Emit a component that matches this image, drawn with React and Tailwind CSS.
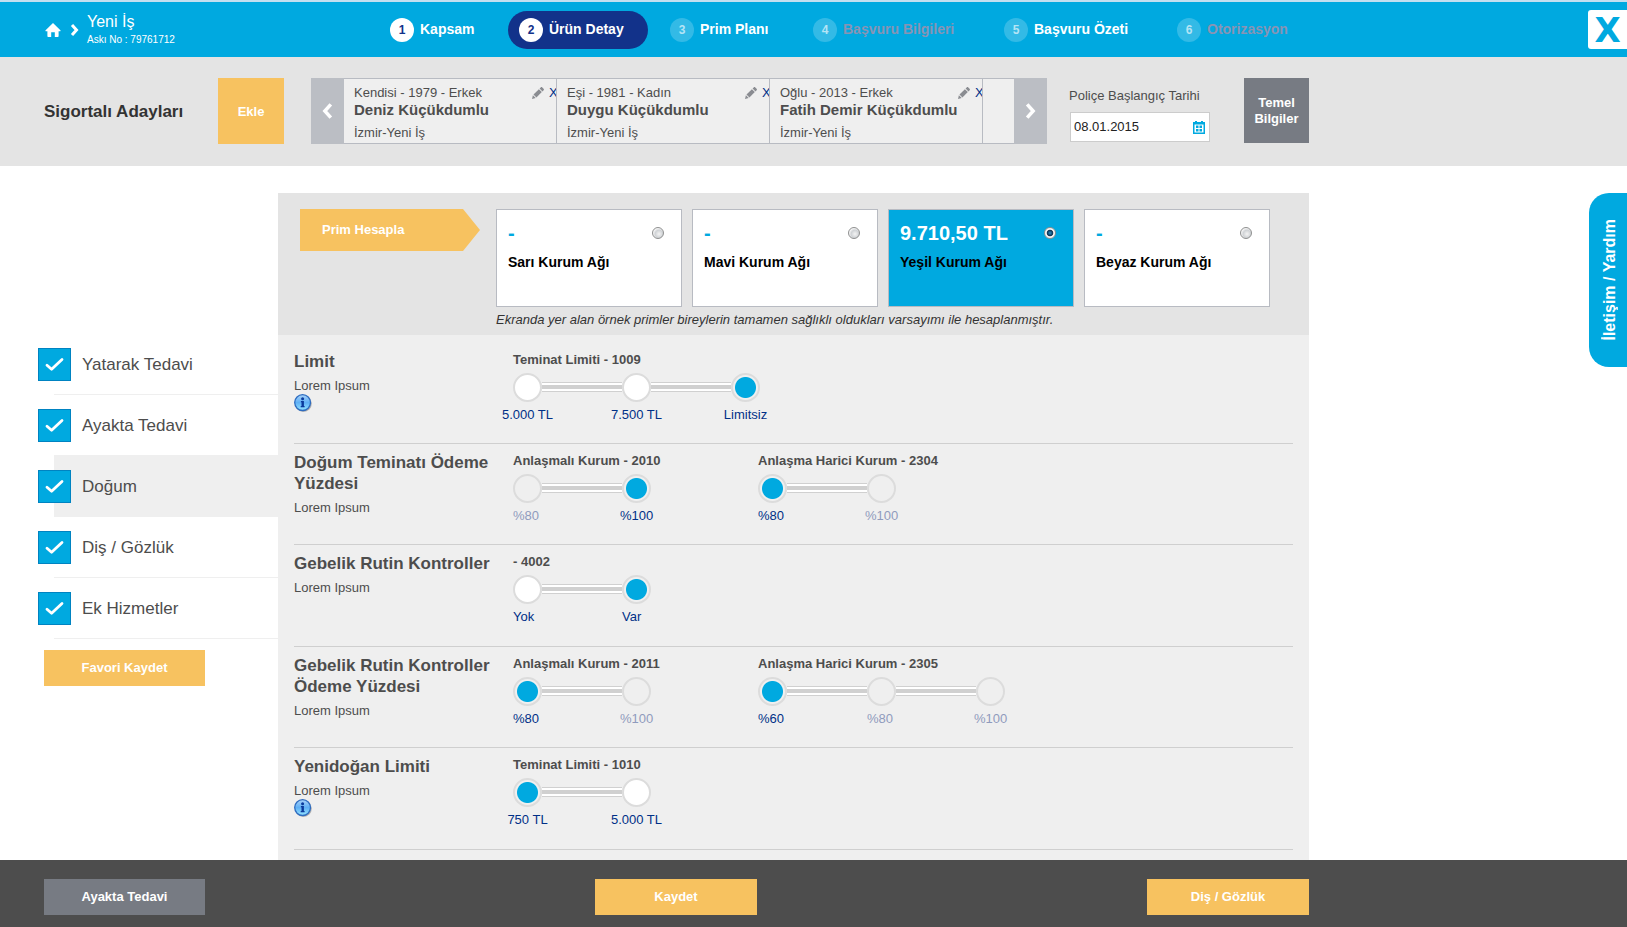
import React, { useState } from "react";

const STEPS = [
  { n: 1, label: "Kapsam", state: "done", width: "min-w-14" },
  { n: 2, label: "Ürün Detay", state: "active", width: "min-w-[78px]" },
  { n: 3, label: "Prim Planı", state: "open", width: "min-w-[70px]" },
  { n: 4, label: "Başvuru Bilgileri", state: "disabled", width: "min-w-[118px]" },
  { n: 5, label: "Başvuru Özeti", state: "open", width: "min-w-[100px]" },
  { n: 6, label: "Otorizasyon", state: "disabled", width: "min-w-[84px]" },
];

const PEOPLE = [
  { info: "Kendisi - 1979 - Erkek", name: "Deniz Küçükdumlu", place: "İzmir-Yeni İş" },
  { info: "Eşi - 1981 - Kadın", name: "Duygu Küçükdumlu", place: "İzmir-Yeni İş" },
  { info: "Oğlu - 2013 - Erkek", name: "Fatih Demir Küçükdumlu", place: "İzmir-Yeni İş" },
];

const NETWORKS = [
  { price: "-", name: "Sarı Kurum Ağı" },
  { price: "-", name: "Mavi Kurum Ağı" },
  { price: "9.710,50 TL", name: "Yeşil Kurum Ağı" },
  { price: "-", name: "Beyaz Kurum Ağı" },
];

const MENU = ["Yatarak Tedavi", "Ayakta Tedavi", "Doğum", "Diş / Gözlük", "Ek Hizmetler"];

const ROWS = [
  {
    title: "Limit",
    info: true,
    height: "min-h-[101px]",
    groups: [
      { id: "g1009", label: "Teminat Limiti - 1009", value: 2, options: ["5.000 TL", "7.500 TL", "Limitsiz"] },
    ],
  },
  {
    title: "Doğum Teminatı Ödeme Yüzdesi",
    height: "min-h-[101px]",
    groups: [
      { id: "g2010", label: "Anlaşmalı Kurum - 2010", value: 1, locked: true, options: ["%80", "%100"] },
      { id: "g2304", label: "Anlaşma Harici Kurum - 2304", value: 0, locked: true, options: ["%80", "%100"] },
    ],
  },
  {
    title: "Gebelik Rutin Kontroller",
    height: "min-h-[102px]",
    groups: [{ id: "g4002", label: "- 4002", value: 1, options: ["Yok", "Var"] }],
  },
  {
    title: "Gebelik Rutin Kontroller Ödeme Yüzdesi",
    height: "min-h-[101px]",
    groups: [
      { id: "g2011", label: "Anlaşmalı Kurum - 2011", value: 0, locked: true, options: ["%80", "%100"] },
      { id: "g2305", label: "Anlaşma Harici Kurum - 2305", value: 0, locked: true, options: ["%60", "%80", "%100"] },
    ],
  },
  {
    title: "Yenidoğan Limiti",
    info: true,
    height: "min-h-[102px]",
    groups: [{ id: "g1010", label: "Teminat Limiti - 1010", value: 0, options: ["750 TL", "5.000 TL"] }],
  },
];

function HomeIcon() {
  return (
    <svg width="16" height="14" viewBox="0 0 16 14" fill="#fff" aria-hidden="true">
      <path d="M8 0 15.4 7.2c.4.5.1 1-.5 1H13.600v5c0 .5-.3.8-.8.8H9.800V9.200H6.200V14H3.200c-.5 0-.8-.3-.8-.8v-5H1.100c-.6 0-.9-.5-.5-1Z" />
    </svg>
  );
}

function Chevron({ left, width, height, stroke }) {
  return (
    <svg width={width} height={height} viewBox="0 0 8 12" fill="none" aria-hidden="true">
      <path d={left ? "M6.500 1 2 6l4.500 5" : "M1.500 1 6 6l-4.500 5"} stroke="#fff" strokeWidth={stroke} />
    </svg>
  );
}

function PencilIcon() {
  return (
    <svg width="12" height="12" viewBox="0 0 12 12" fill="#8a8c91" aria-hidden="true">
      <path d="M0 12 .9 8.300 3.700 11.100Z" />
      <path d="M1.500 7.600 6.900 2.200 9.800 5.100 4.400 10.500Z" />
      <path d="M7.600 1.500 8.700.4c.5-.5 1.100-.5 1.600 0l1.300 1.300c.5.5.5 1.100 0 1.600l-1.100 1.100Z" />
    </svg>
  );
}

function CalendarIcon() {
  return (
    <svg width="12" height="13" viewBox="0 0 12 13" aria-hidden="true">
      <path d="M0 1h2V0h2v1h4V0h2v1h2v12H0Z" fill="#00a9e0" />
      <path d="M1.500 3.500h9v8h-9Z" fill="#fff" />
      <path d="M3 4.500h2.500V7H3ZM6.500 4.500H9V7H6.500ZM3 8h2.500v2.500H3ZM6.500 8H9v2.500H6.500Z" fill="#00a9e0" />
    </svg>
  );
}

function InfoIcon() {
  return (
    <svg width="18" height="18" viewBox="0 0 18 18" aria-hidden="true">
      <defs>
        <linearGradient id="infoFill" x1="0" y1="0" x2="0" y2="1">
          <stop offset="0" stopColor="#a9d2fa" />
          <stop offset="0.500" stopColor="#5fb0f5" />
          <stop offset="1" stopColor="#93e4ff" />
        </linearGradient>
      </defs>
      <circle cx="9.500" cy="9.600" r="8.300" fill="#b0b0b0" />
      <circle cx="8.600" cy="8.600" r="7.900" fill="url(#infoFill)" stroke="#2e6cc0" strokeWidth="1.300" />
      <circle cx="8.600" cy="4.700" r="1.500" fill="#0b3a9c" />
      <path d="M6.900 7h3v5h.7v1.200H6.700V12h.8V8.200h-.6Z" fill="#0b3a9c" />
    </svg>
  );
}

function Step({ n, label, state, width }) {
  const circle = {
    done: "bg-white text-[#12328a]",
    active: "bg-white text-[#12328a]",
    open: "bg-[#33bae6] text-[#b5e4f5]",
    disabled: "bg-[#33bae6] text-[#b5e4f5]",
  }[state];
  return (
    <li>
      <a
        href="#"
        className={`flex h-[38px] items-center gap-[6px] rounded-full pl-[11px] pr-[21px] text-[14px] font-bold ${
          state === "active" ? "bg-[#12328a]" : ""
        } ${state === "disabled" ? "text-[#8894b4]" : "text-white"}`}
      >
        <span className={`flex size-6 items-center justify-center rounded-full text-[12px] ${circle}`}>{n}</span>
        <span className={`whitespace-nowrap ${width}`}>{label}</span>
      </a>
    </li>
  );
}

function PersonCard({ person }) {
  return (
    <li className="flex w-[213px] shrink-0 items-start justify-between overflow-hidden border-r border-[#b8bbc2] pl-[10px] pt-[5px]">
      <div className="whitespace-nowrap text-[13px] leading-[18px] text-[#4d4d4d]">
        <p>{person.info}</p>
        <p className="text-[15px] font-bold leading-4">{person.name}</p>
        <p className="pt-[6px]">{person.place}</p>
      </div>
      <div className="-ml-4 flex h-[18px] items-center gap-[5px]">
        <button aria-label="Düzenle">
          <PencilIcon />
        </button>
        <button aria-label="Sil" className="w-[7px] overflow-hidden text-left text-[13px] leading-[18px] text-[#003087]">
          X
        </button>
      </div>
    </li>
  );
}

function NetworkCard({ item, index, selected, onSelect }) {
  return (
    <label
      className={`flex h-[98px] flex-col border border-[#b8bbc2] px-[11px] pt-[10px] ${
        selected ? "bg-[#00a9e0]" : "bg-white"
      }`}
    >
      <span className="flex items-center justify-between pr-[6px]">
        <span className={`text-[20px] font-bold leading-[26px] ${selected ? "text-white" : "text-[#00a9e0]"}`}>
          {item.price}
        </span>
        <input
          type="radio"
          name="network"
          value={index}
          checked={selected}
          onChange={() => onSelect(index)}
          className="size-3 appearance-none rounded-full border border-[#8e8f8f] bg-[radial-gradient(circle_at_60%_60%,#f4f4f4_0%,#d0d3d6_45%,#f8f8f8_70%)] checked:bg-[radial-gradient(circle,#2a8fc4_0%,#0b3050_40%,#f4f4f4_52%)]"
        />
      </span>
      <span className="pt-[6px] text-[14px] font-bold leading-5 text-black">{item.name}</span>
    </label>
  );
}

function OptionGroup({ group, value, onChange }) {
  return (
    <fieldset className="w-[245px]">
      <legend className="whitespace-nowrap text-[13px] font-bold leading-4 text-[#4d4d4d]">{group.label}</legend>
      <div className="flex pt-[5px]">
        {group.options.map((opt, i) => {
          const on = i === value;
          const off = group.locked && !on;
          return (
            <React.Fragment key={opt}>
              {i > 0 && (
                <span className="mt-[9px] flex h-[10px] w-20 shrink-0 flex-col justify-center border-y border-[#d0d0d0] bg-white">
                  <span className="h-1 bg-[#d0d0d0]" />
                </span>
              )}
              <label className="flex w-[29px] shrink-0 flex-col items-center">
                <input
                  type="radio"
                  name={group.id}
                  checked={on}
                  disabled={off}
                  onChange={() => onChange(group.id, i)}
                  className={`size-[29px] shrink-0 appearance-none rounded-full border-2 border-[#dcdcdc] ${
                    on
                      ? "bg-[radial-gradient(circle,#00a9e0_10px,#f0f0f0_11px)]"
                      : off
                        ? "bg-[#efefef]"
                        : "bg-white"
                  }`}
                />
                <span
                  className={`min-w-full whitespace-nowrap pt-[5px] text-[13px] leading-4 ${
                    off ? "text-[#8f9bbd]" : "text-[#003087]"
                  }`}
                >
                  {opt}
                </span>
              </label>
            </React.Fragment>
          );
        })}
      </div>
    </fieldset>
  );
}

export default function App() {
  const [network, setNetwork] = useState(2);
  const [date, setDate] = useState("08.01.2015");
  const [values, setValues] = useState(
    Object.fromEntries(ROWS.flatMap((r) => r.groups).map((g) => [g.id, g.value]))
  );
  const setOption = (id, i) => setValues((v) => ({ ...v, [id]: i }));

  return (
    <div className="flex min-h-screen flex-col bg-white font-['Liberation_Sans',Arial,sans-serif] text-[#4d4d4d]">
      <header className="flex h-[57px] items-center justify-between border-t-2 border-[#c3dff0] bg-[#00a9e0]">
        <div className="flex items-center">
          <div className="flex w-[379px] items-center pl-[45px]">
            <a href="#" aria-label="Ana sayfa">
              <HomeIcon />
            </a>
            <span className="pl-[9px]">
              <Chevron width={9} height={12} stroke={3} />
            </span>
            <div className="pl-2 text-white">
              <h1 className="text-[16px] leading-5">Yeni İş</h1>
              <p className="text-[10px] leading-4">Askı No : 79761712</p>
            </div>
          </div>
          <nav>
            <ol className="flex gap-[11px]">
              {STEPS.map((s) => (
                <Step key={s.n} {...s} />
              ))}
            </ol>
          </nav>
        </div>
        <button
          aria-label="Kapat"
          className="flex size-[39px] items-center justify-center rounded-l-[3px] bg-white font-['DejaVu_Sans',sans-serif] text-[34px] font-bold leading-none text-[#00a9e0]"
        >
          X
        </button>
      </header>

      <section className="h-[109px] bg-[#e4e4e4] pt-[21px]">
        <div className="flex max-w-[1309px] items-start pl-11">
          <h2 className="w-[174px] text-[17px] font-bold leading-[68px] text-[#333]">Sigortalı Adayları</h2>
          <button className="size-[66px] bg-[#f7c260] pt-[2px] text-[13px] font-bold text-white">Ekle</button>
          <div className="ml-[27px] flex h-[66px] w-[736px] bg-[#efefef]">
            <button aria-label="Önceki" className="flex w-[33px] shrink-0 items-center justify-center bg-[#bbbec4]">
              <Chevron left width={11} height={16} stroke={2.6} />
            </button>
            <ul className="flex min-w-0 flex-1 overflow-hidden border-y border-[#b8bbc2]">
              {PEOPLE.map((p) => (
                <PersonCard key={p.name} person={p} />
              ))}
            </ul>
            <button aria-label="Sonraki" className="flex w-[33px] shrink-0 items-center justify-center bg-[#bbbec4]">
              <Chevron width={11} height={16} stroke={2.6} />
            </button>
          </div>
          <div className="ml-[22px] pt-[9px]">
            <label htmlFor="start" className="block text-[13px] leading-[18px]">
              Poliçe Başlangıç Tarihi
            </label>
            <div className="ml-px mt-[7px] flex h-[30px] w-[140px] items-center border border-[#ccc] bg-white pr-1">
              <input
                id="start"
                value={date}
                onChange={(e) => setDate(e.target.value)}
                className="min-w-0 flex-1 pl-[3px] text-[13px] text-[#222] outline-none"
              />
              <button aria-label="Takvim">
                <CalendarIcon />
              </button>
            </div>
          </div>
          <button className="ml-auto size-[65px] bg-[#777b83] text-[13px] font-bold leading-4 text-white">
            Temel Bilgiler
          </button>
        </div>
      </section>

      <main className="flex flex-1 items-start justify-between pt-[27px]">
        <div className="flex min-w-0 max-w-[1309px] flex-1 self-stretch">
          <aside className="w-[278px] shrink-0 pt-[141px]">
            <ul className="pl-[54px]">
              {MENU.map((m) => (
                <li
                  key={m}
                  className={`h-[61px] border-b border-[#efefef] ${m === "Doğum" ? "bg-[#efefef]" : ""}`}
                >
                  <label className="-ml-4 flex h-full items-center gap-[11px] text-[17px]">
                    <span className="relative size-[33px]">
                      <input
                        type="checkbox"
                        defaultChecked
                        className="block size-[33px] appearance-none border border-[#0083c1] bg-[#00a9e0]"
                      />
                      <svg
                        className="pointer-events-none absolute inset-0"
                        width="33"
                        height="33"
                        viewBox="0 0 33 33"
                        fill="none"
                        aria-hidden="true"
                      >
                        <path d="M9 17.200 13.600 21.300 24 11.500" stroke="#fff" strokeWidth="2.800" strokeLinecap="round" strokeLinejoin="round" />
                      </svg>
                    </span>
                    <span className="pt-[2px]">{m}</span>
                  </label>
                </li>
              ))}
            </ul>
            <button className="ml-11 mt-[11px] h-9 w-[161px] bg-[#f7c260] text-[13px] font-bold text-white">
              Favori Kaydet
            </button>
          </aside>

          <div className="min-w-0 flex-1 bg-[#efefef]">
            <div className="flex bg-[#e4e4e4] pb-[7px] pl-[22px] pr-[39px] pt-4">
              <div className="w-[196px] shrink-0">
                <button className="h-[42px] w-[180px] bg-[#f7c260] pl-[22px] text-left text-[13px] font-bold text-white [clip-path:polygon(0_0,163px_0,100%_50%,163px_100%,0_100%)]">
                  Prim Hesapla
                </button>
              </div>
              <div className="min-w-0 flex-1">
                <div className="grid grid-cols-4 gap-[10px]">
                  {NETWORKS.map((n, i) => (
                    <NetworkCard key={n.name} item={n} index={i} selected={i === network} onSelect={setNetwork} />
                  ))}
                </div>
                <p className="pt-[5px] text-[13px] italic leading-4 text-[#333]">
                  Ekranda yer alan örnek primler bireylerin tamamen sağlıklı oldukları varsayımı ile hesaplanmıştır.
                </p>
              </div>
            </div>

            <div className="px-4 pb-[9px] pt-2">
              {ROWS.map((r) => (
                <div key={r.title} className={`flex border-b border-[#cfcfcf] ${r.height}`}>
                  <div className="w-[219px] shrink-0 pt-2">
                    <h3 className="text-[17px] font-bold leading-[21px]">{r.title}</h3>
                    <p className="pt-[6px] text-[13px] leading-4">Lorem Ipsum</p>
                    {r.info && (
                      <button aria-label="Bilgi" className="block">
                        <InfoIcon />
                      </button>
                    )}
                  </div>
                  <div className="flex pt-[9px]">
                    {r.groups.map((g) => (
                      <OptionGroup key={g.id} group={g} value={values[g.id]} onChange={setOption} />
                    ))}
                  </div>
                </div>
              ))}
            </div>
          </div>
        </div>
        <button className="flex h-[174px] w-[38px] items-center justify-center rounded-l-[20px] bg-[#00a9e0] pl-1 text-[16px] font-bold text-white">
          <span className="rotate-180 [writing-mode:vertical-rl]">İletişim / Yardım</span>
        </button>
      </main>

      <footer className="h-[67px] bg-[#4d4d4d] pt-[19px]">
        <div className="flex max-w-[1309px] justify-between pl-11 text-[13px] font-bold text-white">
          <button className="h-9 w-[161px] bg-[#777b83]">Ayakta Tedavi</button>
          <button className="h-9 w-[162px] bg-[#f7c260]">Kaydet</button>
          <button className="h-9 w-[162px] bg-[#f7c260]">Diş / Gözlük</button>
        </div>
      </footer>
    </div>
  );
}
